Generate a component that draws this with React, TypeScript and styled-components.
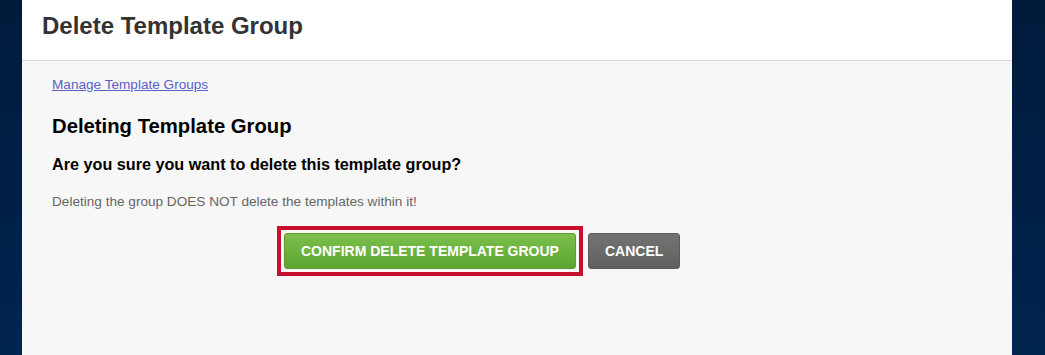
import React from "react";
import styled, { createGlobalStyle } from "styled-components";

const GlobalStyle = createGlobalStyle`
  html, body {
    margin: 0;
    padding: 0;
    height: 100%;
  }
  body {
    background: linear-gradient(180deg, #001a3b 0%, #00254f 100%);
    font-family: "Liberation Sans", Arial, sans-serif;
  }
  #root {
    height: 100%;
  }
`;

const Page = styled.div`
  display: flex;
  height: 100%;
  padding: 0 33px 0 22px;
  box-sizing: border-box;
`;

const Panel = styled.main`
  flex: 1;
  display: flex;
  flex-direction: column;
  background: #f7f7f7;
  min-height: 355px;
`;

const Header = styled.header`
  height: 61px;
  box-sizing: border-box;
  padding: 12px 20px 0;
  background: #ffffff;
  border-bottom: 1px solid #dcdcdc;
`;

const Title = styled.h1`
  margin: 0;
  font-size: 24px;
  line-height: 1.15;
  font-weight: 700;
  color: #333333;
`;

const Body = styled.section`
  padding: 15.5px 30px 0;
  display: flex;
  flex-direction: column;
  align-items: flex-start;
`;

const BackLink = styled.a`
  font-size: 13.6px;
  line-height: 1.15;
  color: #5b5ec9;
  text-decoration: underline;
  cursor: pointer;
`;

const Heading = styled.h2<{ $size: number; $gap: number }>`
  margin: ${(p) => p.$gap}px 0 0;
  font-size: ${(p) => p.$size}px;
  line-height: 1.15;
  font-weight: 700;
  color: #000000;
`;

const Note = styled.p`
  margin: 20.4px 0 0;
  font-size: 13.6px;
  line-height: 1.15;
  color: #666666;
`;

const Actions = styled.div`
  display: flex;
  align-items: center;
  margin: 16.2px 0 0 225px;
`;

const Highlight = styled.div`
  display: flex;
  padding: 3px;
  border: 4px solid #c8102e;
`;

const Button = styled.button<{ $variant: "confirm" | "cancel" }>`
  height: 36px;
  padding: 0 16px;
  font-family: "Liberation Sans", Arial, sans-serif;
  font-size: 14px;
  font-weight: 700;
  text-transform: uppercase;
  color: #ffffff;
  border-radius: 3px;
  cursor: pointer;
  border: 1px solid
    ${(p) => (p.$variant === "confirm" ? "#5c9c31" : "#5a5a5a")};
  background: ${(p) =>
    p.$variant === "confirm"
      ? "linear-gradient(180deg, #7cbf4d 0%, #6cb33e 50%, #5da430 100%)"
      : "linear-gradient(180deg, #737373 0%, #6a6a6a 50%, #606060 100%)"};
  margin-left: ${(p) => (p.$variant === "cancel" ? "5px" : "0")};
`;

export default function App() {
  return (
    <>
      <GlobalStyle />
      <Page>
        <Panel>
          <Header>
            <Title>Delete Template Group</Title>
          </Header>
          <Body>
            <BackLink>Manage Template Groups</BackLink>
            <Heading $size={20.3} $gap={23.3}>
              Deleting Template Group
            </Heading>
            <Heading $size={16.2} $gap={16.5}>
              Are you sure you want to delete this template group?
            </Heading>
            <Note>Deleting the group DOES NOT delete the templates within it!</Note>
            <Actions>
              <Highlight>
                <Button $variant="confirm">Confirm Delete Template Group</Button>
              </Highlight>
              <Button $variant="cancel">Cancel</Button>
            </Actions>
          </Body>
        </Panel>
      </Page>
    </>
  );
}
